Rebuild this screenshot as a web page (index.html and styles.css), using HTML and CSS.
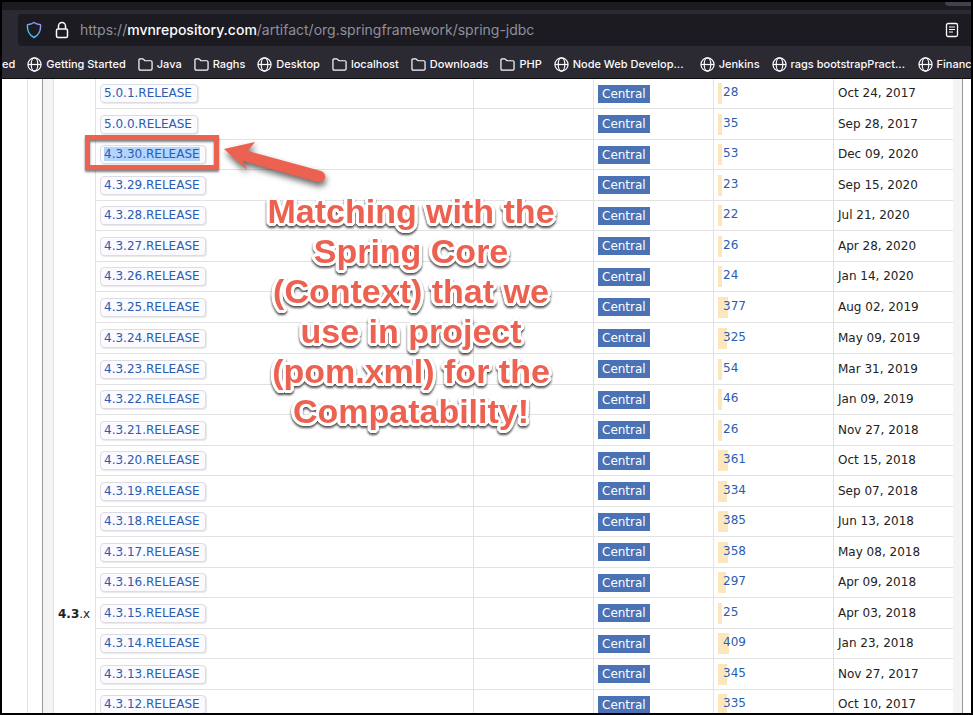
FILE: index.html
```html
<!DOCTYPE html>
<html lang="en">
<head>
<meta charset="utf-8">
<title>spring-jdbc versions</title>
<link rel="stylesheet" href="styles.css">
</head>
<body>
<svg width="0" height="0" class="sprite" aria-hidden="true">
  <symbol id="globe" viewBox="0 0 16 16"><g fill="none" stroke="currentColor" stroke-width="1.3"><circle cx="8" cy="8" r="7"/><ellipse cx="8" cy="8" rx="3.5" ry="7"/><path d="M1 8h14"/></g></symbol>
  <symbol id="folder" viewBox="0 0 16 16"><path d="M1 4V3.200Q1 2 2.200 2H5.300L7.500 4H13.600Q15 4 15 5.400V12.600Q15 14 13.600 14H2.400Q1 14 1 12.600Z" fill="none" stroke="currentColor" stroke-width="1.300" stroke-linejoin="round"/></symbol>
</svg>
<div class="window">
  <header class="chrome">
    <div class="tabs"><span class="tab-edge"></span></div>
    <div class="toolbar">
      <div class="urlbar">
        <svg class="shield" viewBox="0 0 16 18" aria-hidden="true"><defs><linearGradient id="sg" x1="0" y1="1" x2="1" y2="0"><stop offset="0.2" stop-color="#3fc3f5"/><stop offset="1" stop-color="#a58cff"/></linearGradient></defs><path d="M8 1.500C6 3 3.500 3.500 1.500 3.800C1 9.500 3 14 8 16.500C13 14 15 9.500 14.500 3.800C12.500 3.500 10 3 8 1.500Z" fill="none" stroke="url(#sg)" stroke-width="1.400" stroke-linejoin="round"/></svg>
        <svg class="lock" viewBox="0 0 14 18" aria-hidden="true"><g fill="none" stroke="#fbfbfe" stroke-width="1.500"><rect x="1.500" y="8" width="11" height="8.500" rx="1.500"/><path d="M3.500 8V5A3.500 3.500 0 0 1 10.500 5V8"/></g></svg>
        <div class="url">https://<b>mvnrepository.com</b>/artifact/org.springframework/spring-jdbc</div>
        <button class="reader" aria-label="Reader view"><svg viewBox="0 0 14 16" aria-hidden="true"><rect x="1.500" y="1.500" width="11" height="13" rx="1.500" fill="none" stroke="#fbfbfe" stroke-width="1.300"/><path d="M4 5h6M4 7.500h6M4 10h4" stroke="#fbfbfe" stroke-width="1.100"/></svg></button>
      </div>
    </div>
    <nav class="bookmarks">
      <a href="#">ed</a>
      <a href="#"><svg><use href="#globe"/></svg>Getting Started</a>
      <a href="#"><svg><use href="#folder"/></svg>Java</a>
      <a href="#"><svg><use href="#folder"/></svg>Raghs</a>
      <a href="#"><svg><use href="#globe"/></svg>Desktop</a>
      <a href="#"><svg><use href="#folder"/></svg>localhost</a>
      <a href="#"><svg><use href="#folder"/></svg>Downloads</a>
      <a href="#"><svg><use href="#folder"/></svg>PHP</a>
      <a href="#"><svg><use href="#globe"/></svg><span class="long">Node Web Develop...</span></a>
      <a href="#"><svg><use href="#globe"/></svg>Jenkins</a>
      <a href="#"><svg><use href="#globe"/></svg><span class="long">rags bootstrapPract...</span></a>
      <a href="#"><svg><use href="#globe"/></svg>Financ</a>
    </nav>
  </header>
  <main class="page">
    <div class="panel">
      <table class="versions">
        <colgroup><col class="c-group"><col><col class="c-data"><col class="c-data"><col class="c-data"><col class="c-data"></colgroup>
        <tbody>
          <tr><td class="group" rowspan="2"></td><td><a class="ver" href="#">5.0.1.RELEASE</a></td><td></td><td><a class="repo" href="#">Central</a></td><td><div class="use"><i style="width:4px"></i><a href="#">28</a></div></td><td>Oct 24, 2017</td></tr>
          <tr><td><a class="ver" href="#">5.0.0.RELEASE</a></td><td></td><td><a class="repo" href="#">Central</a></td><td><div class="use"><i style="width:4px"></i><a href="#">35</a></div></td><td>Sep 28, 2017</td></tr>
          <tr><td class="group current" rowspan="19"><b>4.3</b>.x</td><td class="marked"><a class="ver" href="#"><mark>4.3.30.RELEASE</mark></a><span class="box"></span></td><td></td><td><a class="repo" href="#">Central</a></td><td><div class="use"><i style="width:4px"></i><a href="#">53</a></div></td><td>Dec 09, 2020</td></tr>
          <tr><td><a class="ver" href="#">4.3.29.RELEASE</a></td><td></td><td><a class="repo" href="#">Central</a></td><td><div class="use"><i style="width:4px"></i><a href="#">23</a></div></td><td>Sep 15, 2020</td></tr>
          <tr><td><a class="ver" href="#">4.3.28.RELEASE</a></td><td></td><td><a class="repo" href="#">Central</a></td><td><div class="use"><i style="width:4px"></i><a href="#">22</a></div></td><td>Jul 21, 2020</td></tr>
          <tr><td><a class="ver" href="#">4.3.27.RELEASE</a></td><td></td><td><a class="repo" href="#">Central</a></td><td><div class="use"><i style="width:4px"></i><a href="#">26</a></div></td><td>Apr 28, 2020</td></tr>
          <tr><td><a class="ver" href="#">4.3.26.RELEASE</a></td><td></td><td><a class="repo" href="#">Central</a></td><td><div class="use"><i style="width:4px"></i><a href="#">24</a></div></td><td>Jan 14, 2020</td></tr>
          <tr><td><a class="ver" href="#">4.3.25.RELEASE</a></td><td></td><td><a class="repo" href="#">Central</a></td><td><div class="use"><i style="width:10px"></i><a href="#">377</a></div></td><td>Aug 02, 2019</td></tr>
          <tr><td><a class="ver" href="#">4.3.24.RELEASE</a></td><td></td><td><a class="repo" href="#">Central</a></td><td><div class="use"><i style="width:9px"></i><a href="#">325</a></div></td><td>May 09, 2019</td></tr>
          <tr><td><a class="ver" href="#">4.3.23.RELEASE</a></td><td></td><td><a class="repo" href="#">Central</a></td><td><div class="use"><i style="width:4px"></i><a href="#">54</a></div></td><td>Mar 31, 2019</td></tr>
          <tr><td><a class="ver" href="#">4.3.22.RELEASE</a></td><td></td><td><a class="repo" href="#">Central</a></td><td><div class="use"><i style="width:4px"></i><a href="#">46</a></div></td><td>Jan 09, 2019</td></tr>
          <tr><td><a class="ver" href="#">4.3.21.RELEASE</a></td><td></td><td><a class="repo" href="#">Central</a></td><td><div class="use"><i style="width:4px"></i><a href="#">26</a></div></td><td>Nov 27, 2018</td></tr>
          <tr><td><a class="ver" href="#">4.3.20.RELEASE</a></td><td></td><td><a class="repo" href="#">Central</a></td><td><div class="use"><i style="width:10px"></i><a href="#">361</a></div></td><td>Oct 15, 2018</td></tr>
          <tr><td><a class="ver" href="#">4.3.19.RELEASE</a></td><td></td><td><a class="repo" href="#">Central</a></td><td><div class="use"><i style="width:9px"></i><a href="#">334</a></div></td><td>Sep 07, 2018</td></tr>
          <tr><td><a class="ver" href="#">4.3.18.RELEASE</a></td><td></td><td><a class="repo" href="#">Central</a></td><td><div class="use"><i style="width:10px"></i><a href="#">385</a></div></td><td>Jun 13, 2018</td></tr>
          <tr><td><a class="ver" href="#">4.3.17.RELEASE</a></td><td></td><td><a class="repo" href="#">Central</a></td><td><div class="use"><i style="width:10px"></i><a href="#">358</a></div></td><td>May 08, 2018</td></tr>
          <tr><td><a class="ver" href="#">4.3.16.RELEASE</a></td><td></td><td><a class="repo" href="#">Central</a></td><td><div class="use"><i style="width:8px"></i><a href="#">297</a></div></td><td>Apr 09, 2018</td></tr>
          <tr><td><a class="ver" href="#">4.3.15.RELEASE</a></td><td></td><td><a class="repo" href="#">Central</a></td><td><div class="use"><i style="width:4px"></i><a href="#">25</a></div></td><td>Apr 03, 2018</td></tr>
          <tr><td><a class="ver" href="#">4.3.14.RELEASE</a></td><td></td><td><a class="repo" href="#">Central</a></td><td><div class="use"><i style="width:11px"></i><a href="#">409</a></div></td><td>Jan 23, 2018</td></tr>
          <tr><td><a class="ver" href="#">4.3.13.RELEASE</a></td><td></td><td><a class="repo" href="#">Central</a></td><td><div class="use"><i style="width:9px"></i><a href="#">345</a></div></td><td>Nov 27, 2017</td></tr>
          <tr><td><a class="ver" href="#">4.3.12.RELEASE</a></td><td></td><td><a class="repo" href="#">Central</a></td><td><div class="use"><i style="width:9px"></i><a href="#">335</a></div></td><td>Oct 10, 2017</td></tr>
        </tbody>
      </table>
    </div>
    <svg class="arrow" viewBox="0 0 108 46" aria-hidden="true"><path d="M3 7L34 0L27 9L100 29Q105 31 104 36Q102 41 96 40L22 19L26 28Z" fill="#ed6150"/></svg>
    <p class="note">Matching with the<br>Spring Core<br>(Context) that we<br>use in project<br>(pom.xml) for the<br>Compatability!</p>
  </main>
</div>
</body>
</html>
```
FILE: styles.css
```css
* { box-sizing: border-box; }

body { margin: 0; }

.sprite { position: absolute; }

a { color: inherit; text-decoration: none; }

.window {
  display: flex;
  flex-direction: column;
  height: 100vh;
  border: 2px solid #000;
  overflow: hidden;
  background: #fff;
}

.chrome {
  flex: none;
  background: #2b2a33;
  border-bottom: 1px solid #0c0c0d;
  color: #fbfbfe;
  font-family: Inter, "Liberation Sans", sans-serif;
}

.tabs {
  display: flex;
  justify-content: flex-end;
  height: 8px;
  background: #1c1b22;
}

.tab-edge {
  width: 26px;
  height: 4px;
  border-radius: 0 0 0 4px;
  background: #42414d;
}

.toolbar { padding: 4px 0 5px 16px; }

.urlbar {
  display: flex;
  align-items: center;
  height: 32px;
  padding: 0 12px 0 8px;
  border-radius: 4px 0 0 4px;
  background: #1c1b22;
}

.shield { width: 16px; height: 18px; }

.lock { width: 14px; height: 18px; margin-left: 13px; }

.url {
  flex: 1;
  margin-left: 11px;
  color: #8f8f9d;
  font-size: 14px;
  line-height: 20px;
  white-space: nowrap;
}

.url b { color: #fbfbfe; font-weight: 500; }

.reader {
  padding: 0;
  border: 0;
  background: none;
  line-height: 0;
}

.reader svg { width: 14px; height: 16px; }

.bookmarks {
  display: flex;
  gap: 12px;
  height: 27px;
  overflow: hidden;
  font-size: 11px;
  font-weight: 500;
  line-height: 27px;
  white-space: nowrap;
}

.bookmarks a {
  display: flex;
  flex: none;
  align-items: center;
  gap: 4px;
}

.bookmarks svg { width: 15px; height: 15px; }

.long { width: 115px; }

.page {
  position: relative;
  flex: 1;
  min-height: 0;
  padding: 0 8px 0 25px;
  overflow: hidden;
  color: #222;
  font-family: Verdana, "DejaVu Sans", sans-serif;
  font-size: 12px;
}

.page::before {
  content: "";
  float: left;
  width: 1px;
  height: 100%;
  background: #e2e2e2;
}

.panel {
  margin-left: 15px;
  padding: 0 9px 0 10px;
  border: solid #999;
  border-width: 0 1px;
  background: #f4f4f4;
}

.versions {
  width: 100%;
  table-layout: fixed;
  border-spacing: 0;
  background: #fff;
}

.c-group { width: 42px; }

.c-data { width: 120px; }

.versions tr { height: 30px; }

.versions tr:nth-child(even),
.versions tr:nth-child(9) { height: 31px; }

.versions td {
  padding: 0 4px;
  border: solid #e2e2e2;
  border-width: 0 0 1px 1px;
  line-height: 17px;
  white-space: nowrap;
}

.versions .group { border-bottom: 0; }

.versions .current {
  padding-bottom: 97px;
  vertical-align: bottom;
}

.ver {
  display: inline-block;
  padding: 0 5px 0 3px;
  border: 1px solid #dcdce2;
  border-radius: 4px;
  background: #fafaff;
  box-shadow: 1px 1px 1px #e8e8e8;
  color: #2a5db0;
}

.ver mark { background: #b3d4fd; color: inherit; }

.marked { position: relative; }

.box {
  position: absolute;
  top: -5px;
  left: -11px;
  width: 134px;
  height: 35px;
  border: 5px solid #ed6150;
  filter: drop-shadow(0 2px 1px rgba(0, 0, 0, 0.5));
}

.repo {
  display: inline-block;
  padding: 0 4px;
  background: #4a72b5;
  color: #fff;
  line-height: 18px;
}

.use { display: grid; }

.use i {
  grid-area: 1 / 1;
  height: 21px;
  background: #fce6bb;
}

.use a {
  grid-area: 1 / 1;
  z-index: 1;
  padding-left: 5px;
  color: #2a5db0;
  line-height: 19px;
}

.arrow {
  position: absolute;
  top: 63px;
  left: 219px;
  width: 108px;
  height: 46px;
  overflow: visible;
  filter: drop-shadow(1px 4px 3px rgba(0, 0, 0, 0.6));
}

.note {
  position: absolute;
  top: 112px;
  left: 259px;
  width: 300px;
  margin: 0;
  color: #ed6150;
  font: bold 34px/40px "Liberation Sans", Arial, sans-serif;
  text-align: center;
  white-space: nowrap;
  text-shadow:
    3px 0 #fff, -3px 0 #fff, 0 3px #fff, 0 -3px #fff,
    2px 2px #fff, -2px 2px #fff, 2px -2px #fff, -2px -2px #fff,
    3px 1px #fff, -3px 1px #fff, 3px -1px #fff, -3px -1px #fff,
    1px 3px #fff, -1px 3px #fff, 1px -3px #fff, -1px -3px #fff;
  filter: drop-shadow(0 2px 1px rgba(0, 0, 0, 0.7));
}
```
